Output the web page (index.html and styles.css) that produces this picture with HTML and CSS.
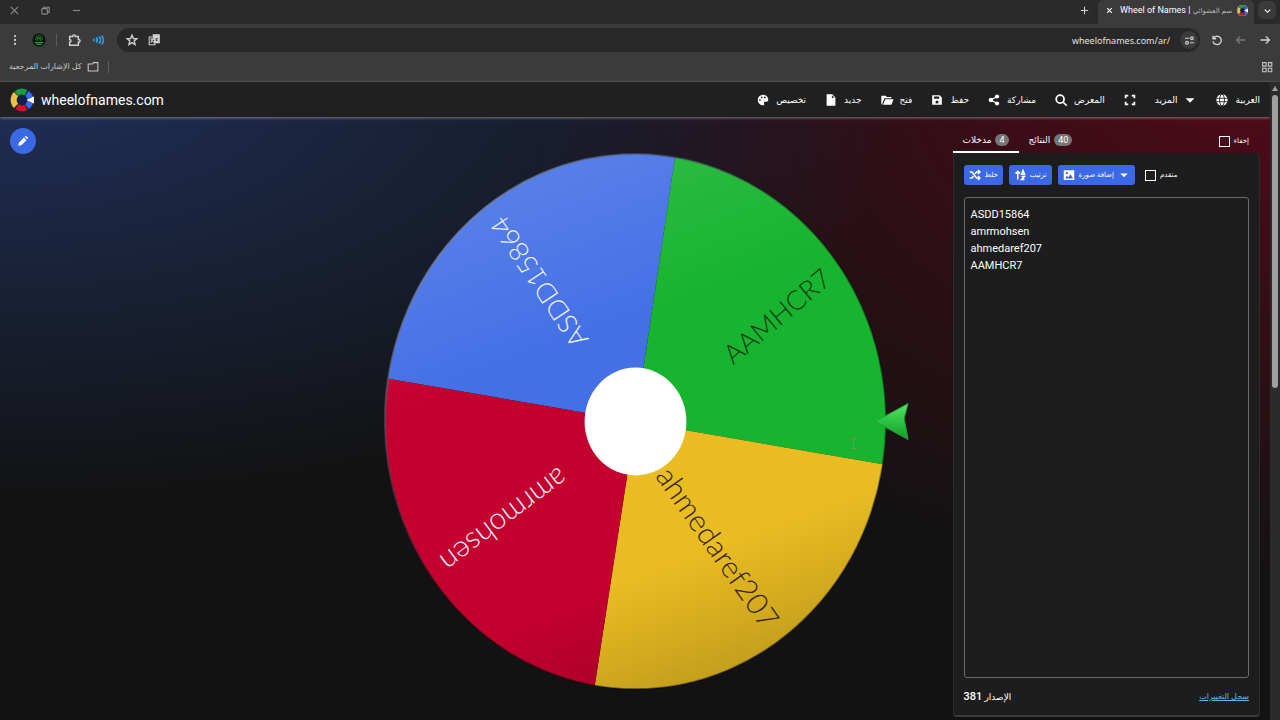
FILE: index.html
```html
<!DOCTYPE html>
<html lang="ar">
<head>
    <meta charset="UTF-8">
    <meta name="viewport" content="width=device-width, initial-scale=1.0">
    <title>Wheel of Names</title>
    <link rel="stylesheet" href="styles.css">
</head>
<body>
    <!-- Browser window -->
    <div class="tab-strip">
        <div class="window-buttons">
            <button aria-label="Close"><svg class="icon-s" viewBox="0 0 12 12"><path d="M2 2l8 8M10 2l-8 8"/></svg></button>
            <button aria-label="Restore"><svg class="icon-s" viewBox="0 0 12 12"><rect x="2" y="4" width="6" height="6" rx="1"/><path d="M4 4V2.500h6V8H8"/></svg></button>
            <button aria-label="Minimize"><svg class="icon-s" viewBox="0 0 12 12"><path d="M2 6h8"/></svg></button>
        </div>
        <button class="new-tab" aria-label="New tab"><svg class="icon-s" viewBox="0 0 12 12"><path d="M6 2v8M2 6h8"/></svg></button>
        <div class="tab">
            <button aria-label="Close tab"><svg class="icon-s" viewBox="0 0 12 12"><path d="M3.500 3.500l5 5M8.500 3.500l-5 5"/></svg></button>
            <span class="tab-title">Wheel of Names | <span>سم العشوائي</span></span>
            <svg class="icon-s" viewBox="0 0 24 24"><use href="#logo"/></svg>
        </div>
        <button class="tab-search" aria-label="Search tabs"><svg class="icon-s" viewBox="0 0 12 12"><path d="M3 5l3 3 3-3"/></svg></button>
    </div>
    <div class="toolbar">
        <button aria-label="Menu"><svg class="icon fill" viewBox="0 0 16 16"><circle cx="8" cy="3.500" r="1.300"/><circle cx="8" cy="8" r="1.300"/><circle cx="8" cy="12.500" r="1.300"/></svg></button>
        <button aria-label="Account"><svg class="icon" viewBox="0 0 16 16"><circle cx="8" cy="8" r="7.500" fill="#07140a" stroke="none"/><path d="M4 8c0-7 8-7 8 0M6 7c0-3 4-3 4 0M5 9l3-3 3 3" stroke="#1d6b28"/><path d="M3 11h10M5 13h6" stroke="#2a9438"/></svg></button>
        <i class="divider"></i>
        <button aria-label="Extensions"><svg class="icon bold-s" viewBox="0 0 16 16"><path d="M3 4h3.500c-.5-2.500 3.500-2.500 3 0H13v3.500c2.500-.5 2.500 3.500 0 3V14H3v-3.500c2 .3 2-3.300 0-3z"/></svg></button>
        <button aria-label="Media"><svg class="icon sound" viewBox="0 0 16 16"><path d="M3 6.500v3M6 5c1.500 2 1.500 4 0 6M9 4c2.500 2.500 2.500 5.500 0 8M12 3c3 3 3 7 0 10"/></svg></button>
        <div class="address">
            <button aria-label="Bookmark"><svg class="icon bold-s" viewBox="0 0 16 16"><path d="M8 2.500l1.600 3.800 4 .3-3.100 2.600 1 4L8 11l-3.500 2.200 1-4-3.100-2.600 4-.3z"/></svg></button>
            <button aria-label="Translate"><svg class="icon" viewBox="0 0 16 16"><path d="M9 4.500H2.500v9H9V9M4 7h4M6 6v1c0 2-1 3-2 4M5 8l3 3"/><path d="M7 2h7v9H9z" fill="#d0d0d0"/><path d="M12.500 6.500h-2v2h1.500" stroke="#444"/></svg></button>
            <input type="text" value="wheelofnames.com/ar/" aria-label="Address">
            <button class="site-info" aria-label="Site info"><svg class="icon-s" viewBox="0 0 12 12"><path d="M1 3.500h5M6.500 8.500H11"/><circle cx="8.700" cy="3.500" r="1.500"/><circle cx="3.300" cy="8.500" r="1.500"/></svg></button>
        </div>
        <button aria-label="Reload"><svg class="icon bold-s" viewBox="0 0 16 16"><path d="M3.500 3v3.500H7M4 6a4.800 4.800 0 1 1-.6 3.500"/></svg></button>
        <button class="dim" aria-label="Forward"><svg class="icon bold-s" viewBox="0 0 16 16"><path d="M13 8H3M7 4L3 8l4 4"/></svg></button>
        <button aria-label="Back"><svg class="icon bold-s" viewBox="0 0 16 16"><path d="M3 8h10M9 4l4 4-4 4"/></svg></button>
    </div>
    <div class="bookmarks">
        <span>كل الإشارات المرجعية</span>
        <svg class="icon" viewBox="0 0 16 16"><path d="M2.500 12.500v-8h5l1-1.500h5v9.500z"/></svg>
        <i class="divider"></i>
        <button aria-label="Tab groups"><svg class="icon" viewBox="0 0 16 16"><path d="M3 3h4v4H3zM9.500 3h4v4h-4zM3 9.500h4v4H3zM9.500 9.500h4v4h-4z"/></svg></button>
    </div>

    <!-- Page -->
    <div class="viewport">
        <div class="page">
            <header class="navbar">
                <a class="logo" href="#">
                    <svg viewBox="0 0 24 24">
                        <g id="logo">
                            <circle cx="12" cy="12" r="12" fill="#12204a"/>
                            <g fill="none" stroke-width="6">
                                <path d="M6.500 5.800A8.300 8.300 0 0 1 16 4.700" stroke="#1f9d3a"/>
                                <path d="M17 5.300A8.300 8.300 0 0 1 17 18.700" stroke="#3a6be8"/>
                                <path d="M16 19.300A8.300 8.300 0 0 1 7 18.700" stroke="#d5102f"/>
                                <path d="M6 17.800A8.300 8.300 0 0 1 6 6.200" stroke="#efc030"/>
                            </g>
                            <path d="M16.500 12L24 8.500v7z" fill="#fff"/>
                        </g>
                    </svg>
                    <span>wheelofnames.com</span>
                </a>
                <nav class="nav-links">
                    <a href="#"><svg class="icon fill" viewBox="0 0 16 16"><path fill-rule="evenodd" d="M8 2a6 6 0 0 0 0 12c1.500 0 1.700-1.200 1.200-2-.6-1 0-2 1.300-2H12c1.300 0 2-1 2-2.500C14 4.500 11.500 2 8 2zM4.500 9a1 1 0 1 1 0-2 1 1 0 0 1 0 2zm2-3a1 1 0 1 1 0-2 1 1 0 0 1 0 2zm3.500 0a1 1 0 1 1 0-2 1 1 0 0 1 0 2z"/></svg>تخصيص</a>
                    <a href="#"><svg class="icon fill" viewBox="0 0 16 16"><path fill-rule="evenodd" d="M3 1.500h6.500L13 5v9.500H3zM9 2.500V5.500h3z"/></svg>جديد</a>
                    <a href="#"><svg class="icon fill" viewBox="0 0 16 16"><path d="M1.500 13V3h5L8 4.500h5V6H5l-2 5-.5 2zM3.500 13.500L6 7h9.500L13 13.500z"/></svg>فتح</a>
                    <a href="#"><svg class="icon fill" viewBox="0 0 16 16"><path fill-rule="evenodd" d="M3 2.500h8L13.500 5v8.500h-11v-11zM4.500 4v2.500h6V4zM8 8.500a1.800 1.800 0 1 0 0 3.600 1.800 1.800 0 0 0 0-3.600z"/></svg>حفظ</a>
                    <a href="#"><svg class="icon fill" viewBox="0 0 16 16"><circle cx="4.500" cy="8" r="2.600"/><circle cx="11.500" cy="4" r="2.400"/><circle cx="11.500" cy="12" r="2.400"/><path d="M12 4L4 8l8 4" fill="none" stroke="#fff" stroke-width="1.500"/></svg>مشاركة</a>
                    <a href="#"><svg class="icon bold" viewBox="0 0 16 16"><circle cx="7" cy="7" r="4.500"/><path d="M10 10l4.500 4.500"/></svg>المعرض</a>
                    <a href="#" aria-label="Fullscreen"><svg class="icon bold" viewBox="0 0 16 16"><path d="M3 6V3h3M10 3h3v3M13 10v3h-3M6 13H3v-3"/></svg></a>
                    <a href="#">المزيد<svg class="icon fill" viewBox="0 0 16 16"><path d="M3 6h10l-5 5z"/></svg></a>
                    <a href="#"><svg class="icon globe" viewBox="0 0 16 16"><circle cx="8" cy="8" r="7" fill="#fff"/><ellipse cx="8" cy="8" rx="2.800" ry="6.500"/><path d="M1 6h14M1 10h14"/></svg>العربية</a>
                </nav>
            </header>
            <main class="content">
                <div class="side">
                    <button class="edit" aria-label="Edit"><svg class="icon fill" viewBox="0 0 16 16"><path d="M2.500 13.500l.8-3.500L9 4l3 3-6 5.800zM9.900 3.200l1-.9c.7-.6 3.300 2 2.800 2.800l-.9 1z"/></svg></button>
                </div>
                <svg class="wheel" viewBox="0 -1 636 603">
                    <defs>
                        <clipPath id="disc"><ellipse cx="318" cy="304" rx="251" ry="268"/></clipPath>
                        <linearGradient id="shade" x1="0.200" y1="0" x2="0.600" y2="1">
                            <stop offset="0" stop-color="#fff" stop-opacity=".16"/>
                            <stop offset=".4" stop-color="#fff" stop-opacity="0"/>
                            <stop offset=".76" stop-color="#000" stop-opacity="0"/>
                            <stop offset="1" stop-color="#000" stop-opacity=".2"/>
                        </linearGradient>
                        <linearGradient id="rim" x1="0" y1="0" x2="1" y2="1">
                            <stop offset="0" stop-color="#a9b6e0" stop-opacity=".8"/>
                            <stop offset=".5" stop-color="#000" stop-opacity=".3"/>
                            <stop offset="1" stop-color="#000" stop-opacity=".5"/>
                        </linearGradient>
                        <linearGradient id="arrow" x1="0" y1="0" x2="0" y2="1">
                            <stop offset="0" stop-color="#5be06a"/>
                            <stop offset=".5" stop-color="#2cc443"/>
                            <stop offset="1" stop-color="#149a2a"/>
                        </linearGradient>
                    </defs>
                    <g clip-path="url(#disc)">
                        <path fill="#4470e6" d="M318 304L362 10H0V249z"/>
                        <path fill="#17b42f" d="M318 304L362 10H636V359z"/>
                        <path fill="#e9bc22" d="M318 304L636 359V602H272z"/>
                        <path fill="#c4002f" d="M318 304L272 602H0V249z"/>
                        <rect width="636" height="602" fill="url(#shade)"/>
                    </g>
                    <ellipse cx="318" cy="304" rx="251" ry="268" fill="none" stroke="url(#rim)" stroke-width="2"/>
                    <ellipse cx="318" cy="304" rx="51" ry="54" fill="#fff"/>
                    <g class="names" text-anchor="end">
                        <text class="light caps" transform="translate(187 96) rotate(236)">ASDD15864</text>
                        <text class="caps" transform="translate(516 164) rotate(-40)">AAMHCR7</text>
                        <text class="brown" transform="translate(446 514) rotate(55)">ahmedaref207</text>
                        <text class="light" transform="translate(120 440) rotate(143)">amrmohsen</text>
                    </g>
                    <path d="M558 304l33-18-4 15 4 21z" fill="url(#arrow)" stroke="#1ea535"/>
                    <path d="M534 321h5M534 331h5M536.500 321v10" stroke="#8a8a5a" fill="none"/>
                </svg>
                <aside class="panel">
                    <div class="tabs">
                        <button class="active">مدخلات <b>4</b></button>
                        <button>النتائج <b>40</b></button>
                        <label class="check hide"><input type="checkbox">إخفاء</label>
                    </div>
                    <div class="card">
                        <div class="actions">
                            <button><svg class="icon bold" viewBox="0 0 16 16"><path d="M1 4h3l6 8h4M1 12h3l2-2.500M8 6.500L10 4h4M12 1.500L14.500 4 12 6.500M12 9.500l2.500 2.500-2.500 2.500"/></svg>خلط</button>
                            <button><svg class="icon bold" viewBox="0 0 16 16"><path d="M5 14V3M2 6l3-3 3 3M10 7l2-5 2 5zM10 10h4l-4 4h4"/></svg>ترتيب</button>
                            <button><svg class="icon fill" viewBox="0 0 16 16"><path fill-rule="evenodd" d="M1 1.500h14v13H1zM3 12.500h10.500L10 7l-3 4-2-2zM5 4a1.500 1.500 0 1 0 0 3 1.500 1.500 0 0 0 0-3z"/></svg>إضافة صورة<svg class="icon fill" viewBox="0 0 16 16"><path d="M3 6h10l-5 5z"/></svg></button>
                            <label class="check"><input type="checkbox">متقدم</label>
                        </div>
                        <textarea aria-label="مدخلات" spellcheck="false">ASDD15864
amrmohsen
ahmedaref207
AAMHCR7</textarea>
                        <footer class="version">
                            <span dir="rtl">الإصدار <b>381</b></span>
                            <a href="#">سجل التغييرات</a>
                        </footer>
                    </div>
                </aside>
            </main>
        </div>
        <div class="scrollbar"><i class="scroll-up"></i><i class="scroll-thumb"></i></div>
    </div>
</body>
</html>
```
FILE: styles.css
```css
* {
    margin: 0;
    padding: 0;
    box-sizing: border-box;
}

body {
    display: flex;
    flex-direction: column;
    min-height: 100vh;
    font-family: Roboto, "DejaVu Sans", sans-serif;
    font-size: 9px;
    color: white;
    background-color: #121212;
}

button {
    display: flex;
    align-items: center;
    justify-content: center;
    border: 0;
    background: none;
    color: inherit;
    font: inherit;
    cursor: pointer;
}

a {
    color: inherit;
    text-decoration: none;
}

svg {
    flex: none;
}

.icon,
.icon-s {
    width: 14px;
    height: 14px;
    fill: none;
    stroke: currentColor;
    stroke-width: 1.2;
}

.icon-s {
    width: 11px;
    height: 11px;
}

.fill {
    fill: currentColor;
    stroke: none;
}

.bold {
    stroke-width: 2;
}

.bold-s {
    stroke-width: 1.6;
}

.globe {
    stroke: #222;
    stroke-width: 1;
}

.divider {
    width: 1px;
    height: 12px;
    background-color: #5c5c5c;
}

/* Browser window */
.tab-strip {
    display: flex;
    align-items: center;
    height: 24px;
    padding-right: 4px;
    background-color: #2a2a2a;
}

.window-buttons {
    display: flex;
    flex: 1;
    gap: 20px;
    padding: 0 9px 4px;
    color: #8a8a8a;
}

.new-tab {
    margin-right: 8px;
    padding-bottom: 4px;
    color: #d0d0d0;
}

.tab {
    display: flex;
    align-items: center;
    gap: 5px;
    height: 24px;
    padding: 0 6px 4px;
    border-radius: 6px 6px 0 0;
    background-color: #3b3b3b;
}

.tab-title {
    min-width: 112px;
    white-space: nowrap;
}

.tab-title span {
    color: #b8b8b8;
    font-size: 7px;
}

.tab-search {
    width: 18px;
    height: 18px;
    margin: 0 0 4px 4px;
    border-radius: 6px;
    background-color: #3b3b3b;
}

.toolbar {
    display: flex;
    align-items: center;
    gap: 10px;
    height: 32px;
    padding: 0 8px;
    color: #d0d0d0;
    background-color: #3b3b3b;
}

.address {
    display: flex;
    flex: 1;
    align-items: center;
    gap: 8px;
    height: 24px;
    margin-left: 2px;
    padding: 0 2px 0 8px;
    border-radius: 12px;
    background-color: #282828;
}

.address input {
    flex: 1;
    padding-right: 2px;
    border: 0;
    background: none;
    color: #e0e0e0;
    font-family: "Noto Sans", sans-serif;
    font-size: 9px;
    text-align: right;
}

.site-info {
    width: 18px;
    height: 18px;
    border-radius: 50%;
    background-color: #3b3b3b;
}

.sound {
    color: #2c9be0;
    stroke-width: 2;
}

.dim {
    color: #777;
}

.bookmarks {
    display: flex;
    align-items: center;
    gap: 4px;
    height: 26px;
    padding: 0 6px 4px 9px;
    border-bottom: 1px solid #454545;
    color: #c8c8c8;
    background-color: #3b3b3b;
    font-size: 8px;
}

.bookmarks .divider {
    margin-left: 4px;
}

.bookmarks button {
    margin-left: auto;
}

/* Page */
.viewport {
    display: flex;
    flex: 1;
}

.page {
    display: flex;
    flex: 1;
    flex-direction: column;
    background: radial-gradient(ellipse 72% 66% at 0 0, #1f2f58, transparent),
        radial-gradient(ellipse 60% 80% at 100% 0, #500a1a, transparent),
        #121212;
}

.navbar {
    display: flex;
    align-items: center;
    justify-content: space-between;
    height: 35px;
    padding: 0 10px;
    background-color: #202020;
    box-shadow: 0 1px 3px rgba(255, 255, 255, 0.4);
}

.logo {
    display: flex;
    align-items: center;
    gap: 7px;
    font-size: 14px;
}

.logo svg {
    width: 24px;
    height: 24px;
}

.nav-links {
    display: flex;
    align-items: center;
    gap: 18px;
}

.nav-links a {
    display: flex;
    align-items: center;
    gap: 6px;
}

.content {
    display: grid;
    flex: 1;
    grid-template-columns: 1fr 2fr 1fr;
}

.side {
    padding: 11px 10px;
}

.edit {
    width: 26px;
    height: 26px;
    border-radius: 50%;
    background-color: #3b69e3;
}

.wheel {
    width: 100%;
}

.names {
    fill: #0b3a12;
    font-family: Lato, sans-serif;
    font-size: 30px;
    font-weight: 300;
}

.names .caps {
    font-size: 27px;
}

.names .brown {
    fill: #33240a;
}

.names .light {
    fill: #f1f1ff;
}

.panel {
    display: flex;
    flex-direction: column;
    padding: 10px 10px 3px 0;
}

.tabs {
    display: flex;
    height: 26px;
}

.tabs button {
    gap: 4px;
    padding: 2px 10px 0;
    border-bottom: 2px solid transparent;
}

.tabs .active {
    border-color: white;
}

.tabs b {
    padding: 0 4px;
    border-radius: 6px;
    background-color: #757575;
    font-weight: 400;
    line-height: 12px;
}

.check {
    display: flex;
    align-items: center;
    gap: 4px;
    font-size: 7px;
}

.check input {
    width: 11px;
    height: 11px;
    appearance: none;
    border: 1px solid white;
}

.hide {
    margin: 2px 11px 0 auto;
}

.card {
    display: flex;
    flex: 1;
    flex-direction: column;
    padding: 12px 10px;
    border: 1px solid #2c2c2c;
    border-top: 0;
    border-bottom: 2px solid #3a3a3a;
    border-radius: 4px;
    background-color: #1d1d1d;
}

.actions {
    display: flex;
    gap: 6px;
    margin-bottom: 12px;
}

.actions button {
    gap: 4px;
    height: 20px;
    padding: 0 5px;
    border-radius: 3px;
    background-color: #3b69e3;
    font-size: 7px;
}

.actions .icon {
    width: 12px;
    height: 12px;
}

.actions .check {
    margin-left: 4px;
}

textarea {
    flex: 1;
    padding: 8px 6px;
    resize: none;
    border: 1px solid #6a6a6a;
    border-radius: 3px;
    background: none;
    color: white;
    font-family: Roboto, sans-serif;
    font-size: 11px;
    line-height: 17px;
}

.version {
    display: flex;
    align-items: center;
    justify-content: space-between;
    padding-top: 12px;
}

.version b {
    font-size: 11px;
    font-weight: 500;
}

.version a {
    font-size: 8px;
    color: #6bb4e0;
    text-decoration: underline;
}

.scrollbar {
    display: flex;
    flex-direction: column;
    align-items: center;
    width: 10px;
    background-color: #2b2b2b;
}

.scroll-up {
    margin: 4px 0;
    border: 3px solid transparent;
    border-top: 0;
    border-bottom: 5px solid #9f9f9f;
}

.scroll-thumb {
    width: 6px;
    height: 46%;
    border-radius: 3px;
    background-color: #9f9f9f;
}
```
